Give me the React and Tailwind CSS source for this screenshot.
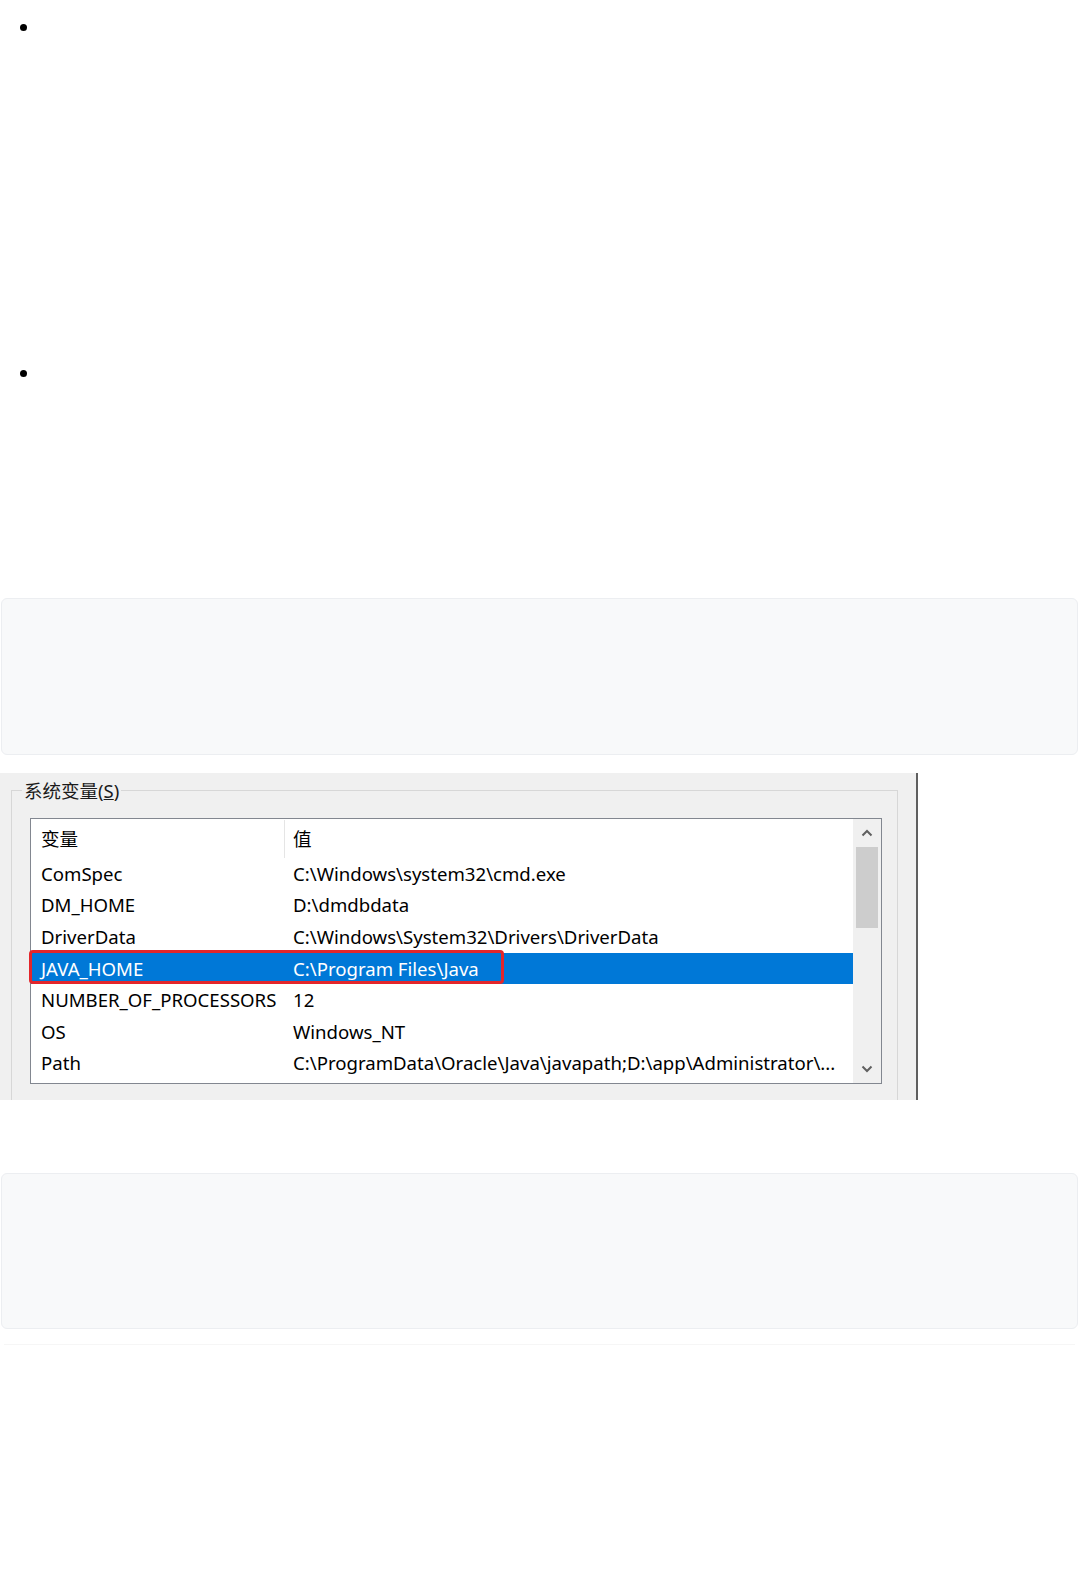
import React from "react";

const rows = [
  ["ComSpec", "C:\\Windows\\system32\\cmd.exe"],
  ["DM_HOME", "D:\\dmdbdata"],
  ["DriverData", "C:\\Windows\\System32\\Drivers\\DriverData"],
  ["JAVA_HOME", "C:\\Program Files\\Java", true],
  ["NUMBER_OF_PROCESSORS", "12"],
  ["OS", "Windows_NT"],
  ["Path", "C:\\ProgramData\\Oracle\\Java\\javapath;D:\\app\\Administrator\\..."],
];

function Screenshot() {
  return (
    <div
      className="relative w-[918px] h-[327px] bg-[#f0f0f0] border-r-2 border-[#5f5f5f] pt-[17px] pl-[11px] pr-[18px]"
      style={{ fontFamily: '"Noto Sans", "Noto Sans CJK SC", sans-serif' }}
    >
      <div className="relative h-full border-l border-t border-r border-[#d7d7d7] pt-[27px] pl-[18px] pr-[16px]">
        <div className="absolute -top-[12px] left-[10px] bg-[#f0f0f0] px-[2px] text-[18.5px] leading-[24px] text-[#1a1a1a]">
          系统变量(<span className="underline">S</span>)
        </div>
        <div className="relative flex w-[852px] h-[266px] border border-[#828790] bg-white">
          <div className="flex-1 flex flex-col pt-[1px]">
            <div className="flex h-[38px] items-center text-[18.6px] text-black">
              <div className="w-[254px] pl-[10px] h-full flex items-center border-r border-[#e5e5e5]">变量</div>
              <div className="pl-[8px]">值</div>
            </div>
            {rows.map(([k, v, sel]) => (
              <div
                key={k}
                className={
                  "flex h-[31.6px] items-center text-[18.6px] " +
                  (sel ? "bg-[#0078d7] text-white" : "text-black")
                }
              >
                <div className="w-[262px] pl-[10px] whitespace-nowrap">{k}</div>
                <div className="whitespace-nowrap">{v}</div>
              </div>
            ))}
          </div>
          <div className="w-[28px] flex flex-col items-center bg-[#f0f0f0]">
            <div className="h-[28px] flex items-center justify-center">
              <svg width="12" height="8" viewBox="0 0 12 8">
                <path d="M1.5 6.5 L6 2 L10.5 6.5" fill="none" stroke="#606060" strokeWidth="2" />
              </svg>
            </div>
            <div className="w-[22px] h-[81px] bg-[#cdcdcd]"></div>
            <div className="flex-1"></div>
            <div className="h-[28px] flex items-center justify-center">
              <svg width="12" height="8" viewBox="0 0 12 8">
                <path d="M1.5 1.5 L6 6 L10.5 1.5" fill="none" stroke="#606060" strokeWidth="2" />
              </svg>
            </div>
          </div>
          <div className="absolute left-[-2px] top-[131px] w-[475px] h-[34px] rounded-[4px] border-[3px] border-[#e3262b]"></div>
        </div>
      </div>
    </div>
  );
}

export default function App() {
  return (
    <div className="bg-white w-[1079px] min-h-[1569px] text-black" style={{ fontFamily: '"Liberation Sans", "Noto Sans CJK SC", sans-serif' }}>
      <ul className="list-disc pl-[40px] pt-[15px] text-[22px] leading-[24px]">
        <li className="h-[346px]">&nbsp;</li>
        <li className="h-[237px]">&nbsp;</li>
      </ul>
      <div className="mx-[1px] h-[157px] rounded-[6px] border border-[#eceef1] bg-[#f8f9fa]"></div>
      <div className="mt-[18px]">
        <Screenshot />
      </div>
      <div className="mt-[73px] mx-[1px] h-[156px] rounded-[6px] border border-[#eceef1] bg-[#f8f9fa]"></div>
      <div className="mt-[15px] mx-[4px] h-px bg-[#f6f6f6]"></div>
    </div>
  );
}
